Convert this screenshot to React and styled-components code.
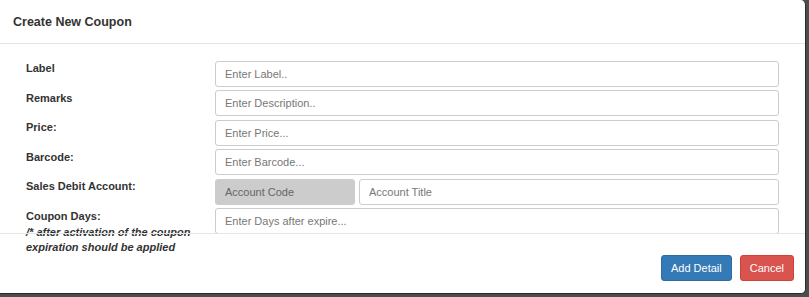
import styled, { createGlobalStyle } from "styled-components";

const Global = createGlobalStyle`
    html, body {
        margin: 0;
        padding: 0;
        background: #4d4d4d;
        font-family: "Liberation Sans", Arial, sans-serif;
        color: #333;
    }
`

const fields = [
    { label: "Label", placeholder: "Enter Label.." },
    { label: "Remarks", placeholder: "Enter Description.." },
    { label: "Price:", placeholder: "Enter Price..." },
    { label: "Barcode:", placeholder: "Enter Barcode..." },
]

const App = () => {
    return (
        <>
            <Global />
            <Modal>
                <Header>
                    <Title>Create New Coupon</Title>
                </Header>
                <Body>
                    {fields.map((f) => (
                        <Row key={f.label}>
                            <Label>{f.label}</Label>
                            <Input placeholder={f.placeholder} />
                        </Row>
                    ))}
                    <Row>
                        <Label>Sales Debit Account:</Label>
                        <Pair>
                            <Input $disabled disabled placeholder="Account Code" />
                            <Input placeholder="Account Title" />
                        </Pair>
                    </Row>
                    <Row>
                        <Label>
                            Coupon Days:
                            <Note>/* after activation of the coupon expiration should be applied</Note>
                        </Label>
                        <Input placeholder="Enter Days after expire..." />
                    </Row>
                </Body>
                <Footer>
                    <Button $color="#337ab7" $border="#2e6da4">Add Detail</Button>
                    <Button $color="#d9534f" $border="#d43f3a">Cancel</Button>
                </Footer>
            </Modal>
        </>
    )
}

const Modal = styled.div`
    width: 806px;
    height: 294px;
    background: #fff;
    border-right: 1px solid #2a2a2a;
    border-bottom: 1px solid #2a2a2a;
    border-radius: 0 5px 5px 0;
    box-sizing: border-box;
    display: flex;
    flex-direction: column;
`

const Header = styled.div`
    height: 43px;
    padding: 0 13px;
    display: flex;
    align-items: center;
    border-bottom: 1px solid #e5e5e5;
    flex-shrink: 0;
`

const Title = styled.h4`
    margin: 0;
    font-size: 12.5px;
    font-weight: 600;
    color: #333;
`

const Body = styled.div`
    height: 189px;
    box-sizing: border-box;
    padding: 16.5px 26px 0 26px;
    display: flex;
    flex-direction: column;
    gap: 3.6px;
    flex-shrink: 0;
`

const Row = styled.div`
    display: grid;
    grid-template-columns: 189px 564px;
    align-items: start;
`

const Label = styled.label`
    font-size: 11px;
    font-weight: bold;
    line-height: 15px;
    padding-top: 0.5px;
    display: flex;
    flex-direction: column;
    gap: 1px;
`

const Note = styled.i`
    font-style: italic;
    font-weight: bold;
`

const Pair = styled.div`
    display: grid;
    grid-template-columns: 140px 1fr;
    gap: 4px;
`

const Input = styled.input`
    height: 26px;
    width: 100%;
    box-sizing: border-box;
    padding: 0 9px;
    font-family: "Liberation Sans", Arial, sans-serif;
    font-size: 11px;
    border: 1px solid #ccc;
    border-radius: 3px;
    background: ${(p) => (p.$disabled ? "#cccccc" : "#fff")};
    color: #555;
    outline: none;
    &::placeholder {
        color: ${(p) => (p.$disabled ? "#666" : "#777")};
        opacity: 1;
    }
`

const Footer = styled.div`
    flex: 1;
    border-top: 1px solid #e5e5e5;
    display: flex;
    justify-content: flex-end;
    align-items: flex-start;
    gap: 8px;
    padding: 21px 11px 0 0;
`

const Button = styled.button`
    height: 26px;
    margin: 0;
    padding: 0 9px;
    font-family: "Liberation Sans", Arial, sans-serif;
    font-size: 11px;
    color: #fff;
    background: ${(p) => p.$color};
    border: 1px solid ${(p) => p.$border};
    border-radius: 3px;
`

export default App
